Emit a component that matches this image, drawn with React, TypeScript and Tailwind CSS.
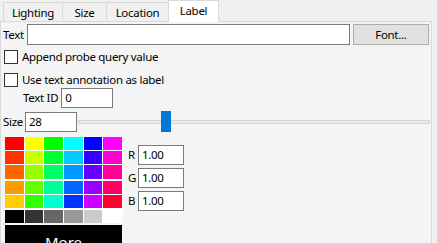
import React from 'react';

const SWATCHES = [
  ['#ff0000', '#ffff00', '#00ff00', '#00ffff', '#0000ff', '#ff00ff'],
  ['#ff3300', '#ccff00', '#00ff33', '#00ccff', '#3300ff', '#ff00cc'],
  ['#ff6600', '#99ff00', '#00ff66', '#0099ff', '#6600ff', '#ff0099'],
  ['#ff9900', '#66ff00', '#00ff99', '#0066ff', '#9900ff', '#ff0066'],
  ['#ffcc00', '#33ff00', '#00ffcc', '#0033ff', '#cc00ff', '#ff0033'],
  ['#000000', '#333333', '#666666', '#999999', '#cccccc', '#ffffff'],
];

// row heights / top gaps measured off the swatch grid
const ROW_CLS = [
  'h-[13px]',
  'h-[13px] mt-[1px]',
  'h-[14px] mt-[1px]',
  'h-[13px] mt-[2px]',
  'h-[13px] mt-[1px]',
  'h-[13px] mt-[2px]',
];

const TABS = [
  { label: 'Lighting', w: 'w-[60px]' },
  { label: 'Size', w: 'w-[45px]' },
  { label: 'Location', w: 'w-[63px]' },
];

function Field({ value, className }: { value: string; className: string }) {
  return (
    <div className={`h-[20px] border border-[#7a7a7a] bg-white flex items-center pl-[3px] ${className}`}>
      {value}
    </div>
  );
}

function Checkbox({ label }: { label: string }) {
  return (
    <div className="flex items-center h-[13px] ml-[1px]">
      <div className="w-[14px] h-[14px] border border-[#333] bg-white" />
      <span className="ml-[4px]">{label}</span>
    </div>
  );
}

export default function App() {
  return (
    <div
      className="w-[438px] h-[243px] overflow-hidden bg-[#f0f0f0] text-[11.5px] tracking-[-0.3px] text-black leading-none flex"
      style={{ fontFamily: '"Noto Sans", "Liberation Sans", sans-serif' }}
    >
      <div className="w-[432px] flex flex-col">
        {/* Tab bar */}
        <div className="h-[21px] flex items-end pl-[3px] relative z-10">
          {TABS.map((t) => (
            <div
              key={t.label}
              className={`${t.w} h-[19px] border border-b-0 border-[#d9d9d9] -ml-px first:ml-0 bg-[#f0f0f0] flex items-center justify-center pt-[1px]`}
            >
              {t.label}
            </div>
          ))}
          <div className="w-[51px] h-[22px] border border-b-0 border-[#d9d9d9] bg-white -ml-px flex items-center justify-center pb-[2px] -mb-px">
            Label
          </div>
        </div>

        {/* Pane */}
        <div className="flex-1 border border-[#d9d9d9] bg-[#f4f4f4] pl-[2px] pr-[1px]">
          <div className="flex items-center h-[21px] mt-[2px]">
            <span>Text</span>
            <div className="ml-[3px] w-[323px] h-[21px] border border-[#7a7a7a] bg-white" />
            <div className="ml-[3px] w-[76px] h-[21px] border border-[#adadad] bg-[#e1e1e1] flex items-center justify-center">
              Font...
            </div>
          </div>

          <div className="mt-[5px]">
            <Checkbox label="Append probe query value" />
          </div>
          <div className="mt-[10px]">
            <Checkbox label="Use text annotation as label" />
          </div>

          <div className="flex items-center mt-[2px] ml-[20px]">
            <span>Text ID</span>
            <Field value="0" className="ml-[3px] w-[52px]" />
          </div>

          <div className="flex items-center mt-[3px]">
            <span>Size</span>
            <Field value="28" className="ml-[2px] w-[52px]" />
            <div className="relative flex-1 h-[21px] flex items-center ml-[1px]">
              <div className="w-full h-[4px] bg-[#e7eaea] border border-[#d6d6d6]" />
              <div className="absolute left-[83px] top-0 w-[10px] h-[21px] bg-[#0078d7]" />
            </div>
          </div>

          <div className="flex mt-[5px] ml-[2px]">
            <div className="flex flex-col">
              <div className="bg-white flex flex-col w-[118px] pr-[1px]">
                {SWATCHES.map((row, i) => (
                  <div key={i} className={`flex gap-[1px] ${ROW_CLS[i]}`}>
                    {row.map((c) => (
                      <div key={c} className="w-[19px] h-full" style={{ background: c }} />
                    ))}
                  </div>
                ))}
              </div>
              <div className="w-[117px] h-[30px] mt-[2px] bg-black text-white text-[15px] tracking-normal flex justify-center pt-[10px]">
                More
              </div>
            </div>

            <div className="ml-[5px] mt-[8px] flex flex-col gap-[3px]">
              {['R', 'G', 'B'].map((k) => (
                <div key={k} className="flex items-center">
                  <span className="w-[10px]">{k}</span>
                  <Field value="1.00" className="w-[46px]" />
                </div>
              ))}
            </div>
          </div>
        </div>
      </div>
      <div className="w-[5px]" />
      <div className="w-px bg-[#d9d9d9]" />
    </div>
  );
}
